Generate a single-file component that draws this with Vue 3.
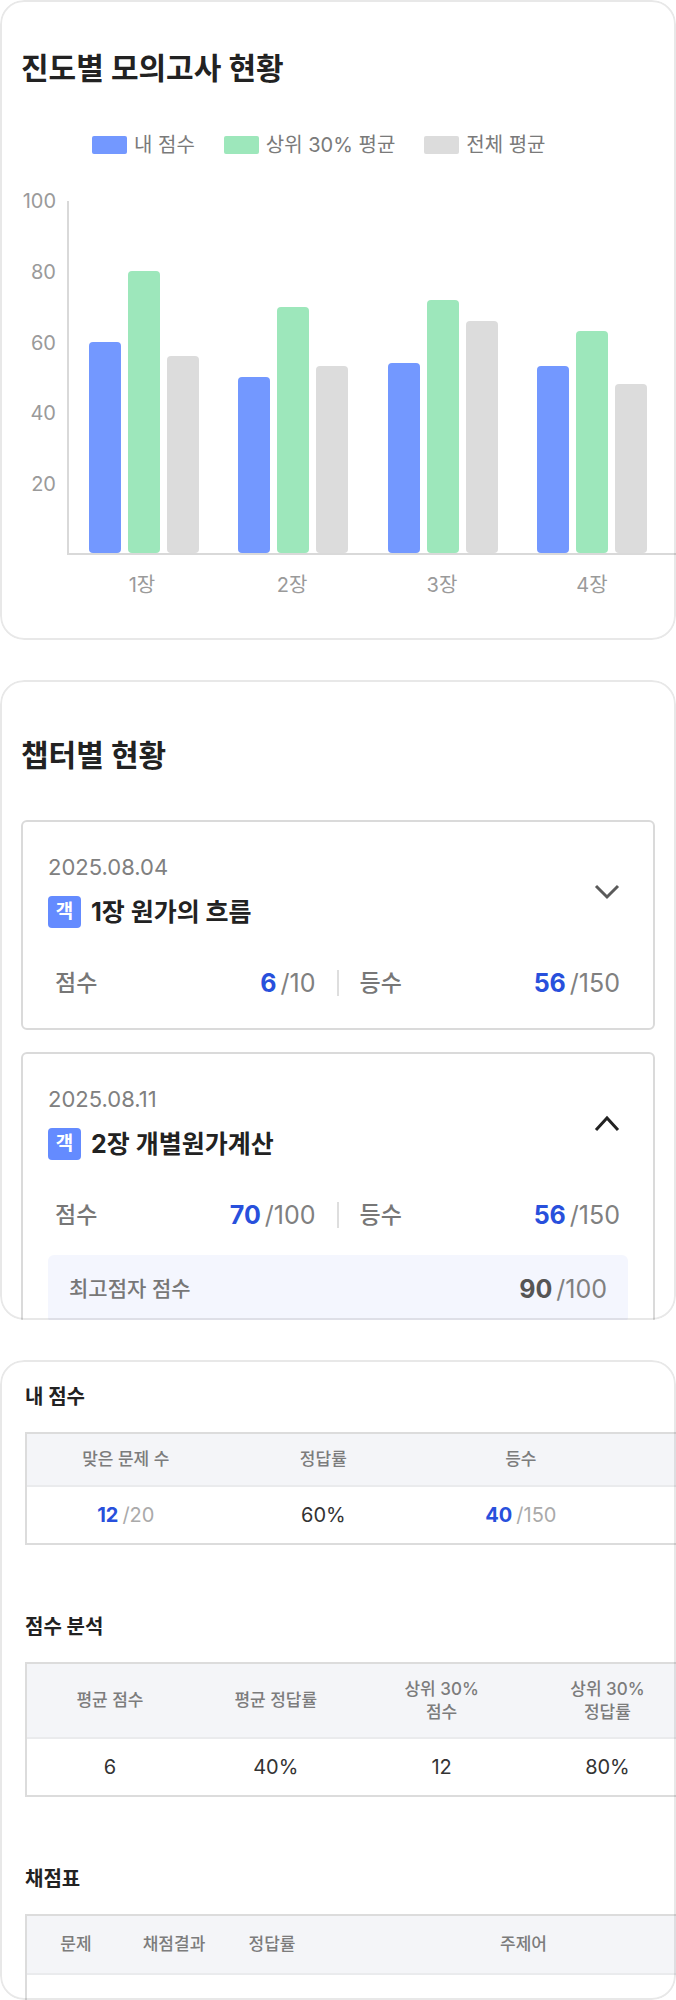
<script setup>
import { ref } from 'vue'

const series = [
  { key: 'mine', label: '내 점수' },
  { key: 'top', label: '상위 30% 평균' },
  { key: 'all', label: '전체 평균' },
]
const ticks = [100, 80, 60, 40, 20]
const groups = [
  { label: '1장', mine: 60, top: 80, all: 56 },
  { label: '2장', mine: 50, top: 70, all: 53 },
  { label: '3장', mine: 54, top: 72, all: 66 },
  { label: '4장', mine: 53, top: 63, all: 48 },
]

const chapters = ref([
  { date: '2025.08.04', title: '1장 원가의 흐름', score: 6, total: 10, rank: 56, people: 150, open: false, best: null },
  { date: '2025.08.11', title: '2장 개별원가계산', score: 70, total: 100, rank: 56, people: 150, open: true, best: 90 },
])
</script>

<template>
  <main class="page">
    <section class="card chart-card">
      <h2 class="title">진도별 모의고사 현황</h2>
      <ul class="legend">
        <li v-for="s in series" :key="s.key"><i class="swatch" :class="s.key"></i>{{ s.label }}</li>
      </ul>
      <div class="chart">
        <div class="y-axis">
          <span v-for="t in ticks" :key="t">{{ t }}</span>
        </div>
        <div class="plot">
          <div v-for="g in groups" :key="g.label" class="group">
            <div v-for="s in series" :key="s.key" class="bar" :class="s.key" :style="{ height: g[s.key] + '%' }"></div>
          </div>
        </div>
        <div class="x-axis">
          <span v-for="g in groups" :key="g.label">{{ g.label }}</span>
        </div>
      </div>
    </section>

    <section class="card chapter-card">
      <h2 class="title">챕터별 현황</h2>
      <div class="items">
        <article v-for="c in chapters" :key="c.date" class="item">
          <button class="item-head" type="button" :aria-expanded="c.open" @click="c.open = !c.open">
            <span class="item-text">
              <span class="date">{{ c.date }}</span>
              <span class="name"><span class="badge">객</span>{{ c.title }}</span>
            </span>
            <svg class="chevron" :class="{ open: c.open }" viewBox="0 0 26 18" width="26" height="18" aria-hidden="true">
              <path v-if="c.open" d="M2 16 L13 4 L24 16" />
              <path v-else d="M2 4 L13 15 L24 4" />
            </svg>
          </button>
          <div class="stats">
            <p class="stat"><span>점수</span><span class="num"><b>{{ c.score }}</b>/{{ c.total }}</span></p>
            <i class="divider"></i>
            <p class="stat"><span>등수</span><span class="num"><b>{{ c.rank }}</b>/{{ c.people }}</span></p>
          </div>
          <div v-if="c.open && c.best" class="detail">
            <p class="stat"><span>최고점자 점수</span><span class="num"><b>{{ c.best }}</b>/{{ c.total }}</span></p>
          </div>
        </article>
      </div>
    </section>

    <section class="card table-card">
      <section class="block">
        <h3 id="my-score">내 점수</h3>
        <table class="t-score" aria-labelledby="my-score">
          <thead><tr><th>맞은 문제 수</th><th>정답률</th><th>등수</th><th></th></tr></thead>
          <tbody>
            <tr>
              <td><b>12</b><span class="of">/20</span></td>
              <td>60%</td>
              <td><b>40</b><span class="of">/150</span></td>
              <td></td>
            </tr>
          </tbody>
        </table>
      </section>
      <section class="block">
        <h3 id="analysis">점수 분석</h3>
        <table class="t-analysis" aria-labelledby="analysis">
          <thead>
            <tr><th>평균 점수</th><th>평균 정답률</th><th>상위 30%<br />점수</th><th>상위 30%<br />정답률</th><th></th></tr>
          </thead>
          <tbody><tr><td>6</td><td>40%</td><td>12</td><td>80%</td><td></td></tr></tbody>
        </table>
      </section>
      <section class="block">
        <h3 id="marking">채점표</h3>
        <table class="t-marking" aria-labelledby="marking">
          <thead><tr><th>문제</th><th>채점결과</th><th>정답률</th><th>주제어</th></tr></thead>
          <tbody><tr><td></td><td></td><td></td><td></td></tr></tbody>
        </table>
      </section>
    </section>
  </main>
</template>

<style>
body {
  background: #fff;
}
</style>

<style scoped>
.page {
  display: grid;
  grid-template-rows: repeat(3, minmax(0, 1fr));
  gap: 40px;
  height: 100vh;
  min-height: 1600px;
  font-family: Inter, "Noto Sans CJK KR", sans-serif;
  color: #222;
}
.page * {
  box-sizing: border-box;
}
h2, h3, p, ul {
  margin: 0;
  padding: 0;
}
.card {
  position: relative;
  min-width: 0;
  overflow: hidden;
  border-radius: 24px;
  background: #fff;
}
.card::after {
  content: "";
  position: absolute;
  inset: 0;
  border: 2px solid rgba(0, 0, 0, 0.09);
  border-radius: 24px;
  pointer-events: none;
}
.title {
  margin-bottom: 45px;
  font-size: 30px;
  line-height: 40px;
  font-weight: 700;
}

/* Bar chart */
.chart-card {
  display: flex;
  flex-direction: column;
  padding: 48px 0 43px 21px;
}
.legend {
  display: flex;
  gap: 29px;
  margin-bottom: 44px;
  padding-left: 71px;
  list-style: none;
  font-size: 20px;
  line-height: 24px;
  color: #7a7a7a;
}
.legend li {
  display: flex;
  align-items: center;
  gap: 7px;
  white-space: nowrap;
}
.swatch {
  width: 35px;
  height: 18px;
  border-radius: 2px;
}
.mine { background: #7398ff; }
.top { background: #9de7bb; }
.all { background: #dcdcdc; }
.chart {
  flex: 1;
  display: grid;
  grid-template-columns: 46px 1fr;
  grid-template-rows: 1fr auto;
  font-size: 20px;
  line-height: 24px;
  color: #9a9a9a;
}
.y-axis {
  display: flex;
  flex-direction: column;
  margin: -12px 11px 12px 0;
  text-align: right;
}
.y-axis span {
  flex: 1;
}
.plot {
  display: grid;
  grid-template-columns: repeat(4, 1fr);
  padding-right: 9px;
  border-left: 2px solid #d9d9d9;
  border-bottom: 2px solid #d9d9d9;
}
.group {
  display: flex;
  justify-content: center;
  align-items: flex-end;
  gap: 7px;
}
.bar {
  width: 32px;
  border-radius: 4px;
}
.x-axis {
  grid-column: 2;
  display: grid;
  grid-template-columns: repeat(4, 1fr);
  margin-top: 18px;
  padding-right: 9px;
  text-align: center;
}

/* Chapter list */
.chapter-card {
  padding: 55px 21px 0;
}
.items {
  display: grid;
  gap: 22px;
}
.item {
  padding: 31px 25px 30px;
  border: 2px solid #dadada;
  border-radius: 6px;
}
.item-head {
  display: flex;
  align-items: center;
  justify-content: space-between;
  width: 100%;
  padding: 0 8px 0 0;
  border: 0;
  background: none;
  font: inherit;
  color: inherit;
  text-align: left;
  cursor: pointer;
}
.item-text {
  display: grid;
  gap: 15px;
}
.date {
  font-size: 22px;
  line-height: 28px;
  color: #808080;
}
.name {
  display: flex;
  align-items: center;
  gap: 10px;
  font-size: 25px;
  line-height: 32px;
  font-weight: 700;
}
.badge {
  width: 33px;
  border-radius: 4px;
  background: #648bff;
  color: #fff;
  font-size: 19px;
  text-align: center;
}
.chevron {
  fill: none;
  stroke: #5a5a5a;
  stroke-width: 3;
}
.chevron.open {
  stroke: #222;
}
.stats {
  display: grid;
  grid-template-columns: 1fr 2px 1fr;
  align-items: center;
  gap: 21px;
  margin-top: 40px;
  padding: 0 8px 0 7px;
}
.stat {
  display: flex;
  justify-content: space-between;
  align-items: center;
  font-size: 23px;
  line-height: 30px;
  font-weight: 500;
  color: #777;
}
.num {
  font-size: 25px;
  font-weight: 400;
  color: #808080;
}
.num b {
  margin-right: 4px;
  font-weight: 700;
  color: #2850dc;
}
.divider {
  height: 26px;
  background: #dedede;
}
.detail {
  margin-top: 25px;
  padding: 19px 21px;
  border-radius: 6px;
  background: #f4f6fe;
}
.detail .stat {
  font-size: 21px;
}
.detail b {
  color: #555;
}

/* Result tables */
.table-card {
  padding: 22px 0 0 25px;
}
.block {
  margin-bottom: 67px;
}
h3 {
  margin-bottom: 20px;
  font-size: 20px;
  line-height: 30px;
  font-weight: 700;
}
table {
  table-layout: fixed;
  border: 2px solid #dcdcdc;
  border-spacing: 0;
}
.t-score { width: 122%; }
.t-analysis { width: 128%; }
.t-marking { width: 108%; }
th, td {
  padding: 0;
  text-align: center;
}
th {
  height: 53px;
  border-bottom: 2px solid #eaebed;
  background: #f4f5f8;
  color: #7c7c7c;
  font-size: 17px;
  line-height: 23px;
  font-weight: 500;
}
.t-analysis th { height: 75px; }
.t-marking th { height: 59px; }
.t-marking th:not(:last-child) { width: 98px; }
td {
  height: 56px;
  font-size: 20px;
  line-height: 24px;
  color: #333;
}
td b {
  margin-right: 4px;
  font-weight: 700;
  color: #2850dc;
}
.of {
  color: #aaa;
}
</style>
